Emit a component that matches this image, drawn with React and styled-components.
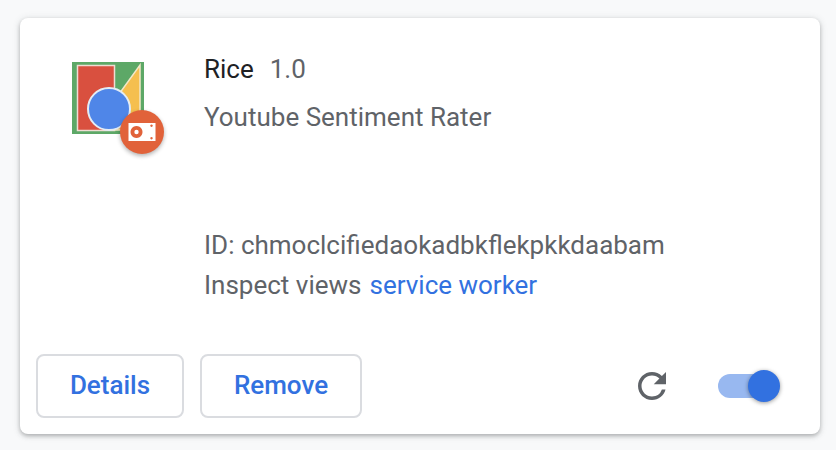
import React from "react";
import styled, { createGlobalStyle } from "styled-components";

const Global = createGlobalStyle`
  html, body { margin: 0; padding: 0; background: #f8f9fa; }
  body { font-family: Roboto, "Liberation Sans", sans-serif; }
`;

const Page = styled.div`
  width: 836px;
  height: 450px;
  padding: 18px 16px 16px 20px;
  box-sizing: border-box;
  overflow: hidden;
`;

const Card = styled.section`
  width: 800px;
  height: 416px;
  box-sizing: border-box;
  background: #fff;
  border-radius: 8px;
  box-shadow: 0 2px 4px rgba(60, 64, 67, 0.35), 0 1px 8px rgba(60, 64, 67, 0.12);
  display: flex;
  flex-direction: column;
  justify-content: space-between;
  padding: 33px 16px 16px;
`;

const Main = styled.div`
  display: flex;
  align-items: flex-start;
`;

const IconSlot = styled.div`
  position: relative;
  width: 72px;
  height: 72px;
  margin: 11px 60px 0 36px;
  flex: none;
`;

const Logo = styled.svg`
  display: block;
  width: 72px;
  height: 72px;
`;

const Badge = styled.div`
  position: absolute;
  left: 48px;
  top: 48px;
  width: 44px;
  height: 44px;
  border-radius: 50%;
  background: #e1623a;
  box-shadow: 0 2px 4px rgba(0, 0, 0, 0.3);
  display: flex;
  align-items: center;
  justify-content: center;
`;

const Info = styled.div`
  display: flex;
  flex-direction: column;
  font-size: 26px;
  line-height: 36px;
  color: #5f6368;
`;

const TitleRow = styled.div`
  display: flex;
  gap: 16px;
`;

const Name = styled.span`
  color: #202124;
`;

const Description = styled.div`
  margin-top: 12px;
`;

const IdRow = styled.div`
  margin-top: 92px;
`;

const InspectRow = styled.div`
  margin-top: 4px;
  display: flex;
  gap: 8px;
`;

const Link = styled.a`
  color: #3271e0;
`;

const Footer = styled.div`
  display: flex;
  align-items: center;
`;

const Button = styled.button`
  height: 64px;
  width: ${(p) => p.$w}px;
  margin-right: 16px;
  padding: 0 0 2px;
  background: #fff;
  border: 2px solid #dadce0;
  border-radius: 8px;
  color: #3271e0;
  font: 500 26px Roboto, sans-serif;
`;

const Spacer = styled.div`
  flex: 1;
`;

const Reload = styled.svg`
  display: block;
  width: 42px;
  height: 42px;
  margin-right: 45px;
`;

const Toggle = styled.div`
  position: relative;
  width: 56px;
  height: 24px;
  margin-right: 30px;
  border-radius: 12px;
  background: #98b8f0;
`;

const Knob = styled.div`
  position: absolute;
  right: -6px;
  top: -4px;
  width: 32px;
  height: 32px;
  border-radius: 50%;
  background: #3271e0;
  box-shadow: 0 1px 4px rgba(0, 0, 0, 0.4);
`;

export default function App() {
  return (
    <Page>
      <Global />
      <Card>
        <Main>
          <IconSlot>
            <Logo viewBox="0 0 72 72">
              <rect width="72" height="72" fill="#5da867" />
              <rect x="5.5" y="3.5" width="37" height="65" fill="#d9503f" stroke="#efdcd2" strokeWidth="1.5" />
              <path d="M68 3 L68 68 L42 68 L42 39 Z" fill="#f5bf4f" stroke="#f3e8c8" strokeWidth="1.5" />
              <circle cx="37" cy="47" r="21" fill="#4f86e8" stroke="#e3ecf5" strokeWidth="2" />
            </Logo>
            <Badge>
              <svg width="28" height="18" viewBox="0 0 28 18">
                <path fillRule="evenodd" fill="#fff" d="M0.5 0H27.5V18H0.5Z M8.5 3a6 6 0 1 0 .01 0Z M23.5 1.5a1.2 1.2 0 1 0 .01 0Z M23.5 14a1.2 1.2 0 1 0 .01 0Z" />
                <circle cx="8.5" cy="9" r="2.2" fill="#fff" />
              </svg>
            </Badge>
          </IconSlot>
          <Info>
            <TitleRow>
              <Name>Rice</Name>
              <span>1.0</span>
            </TitleRow>
            <Description>Youtube Sentiment Rater</Description>
            <IdRow>ID: chmoclcifiedaokadbkflekpkkdaabam</IdRow>
            <InspectRow>
              <span>Inspect views</span>
              <Link>service worker</Link>
            </InspectRow>
          </Info>
        </Main>
        <Footer>
          <Button $w={148}>Details</Button>
          <Button $w={162}>Remove</Button>
          <Spacer />
          <Reload viewBox="0 0 24 24">
            <path fill="#5f6368" d="M17.65 6.35A7.958 7.958 0 0 0 12 4c-4.42 0-7.99 3.58-7.99 8s3.57 8 7.99 8c3.73 0 6.84-2.55 7.73-6h-2.08A5.99 5.99 0 0 1 12 18c-3.31 0-6-2.69-6-6s2.69-6 6-6c1.66 0 3.14.69 4.22 1.78L13 11h7V4l-2.35 2.35z" />
          </Reload>
          <Toggle>
            <Knob />
          </Toggle>
        </Footer>
      </Card>
    </Page>
  );
}
